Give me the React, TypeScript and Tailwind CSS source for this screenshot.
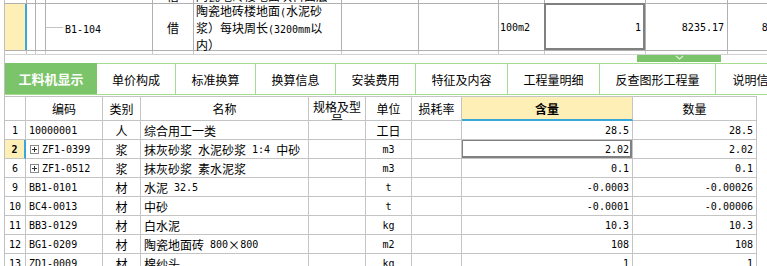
import React from "react";

const SPLIT = /[\x20-\x7e]+|[^\x20-\x7e]+/g;
function M({ s }: { s: string }) {
  const parts = s.match(SPLIT) ?? [];
  return (
    <>
      {parts.map((p, i) =>
        /^[\x20-\x7e]/.test(p) ? (
          <span key={i} className="font-['DejaVu_Sans_Mono',monospace] text-[10px]">
            {p}
          </span>
        ) : (
          <span key={i}>{p}</span>
        )
      )}
    </>
  );
}

const topW = [
  "w-[22px]",
  "w-[9px]",
  "w-[10px]",
  "w-[107px]",
  "w-[41px]",
  "w-[148px]",
  "w-[77px]",
  "w-[80px]",
  "w-[46px]",
  "w-[101px]",
  "w-[82px]",
  "w-[80px]",
];

const tabs: { t: string; w: string; active?: boolean }[] = [
  { t: "工料机显示", w: "w-[92px]", active: true },
  { t: "单价构成", w: "w-[79px]" },
  { t: "标准换算", w: "w-[80px]" },
  { t: "换算信息", w: "w-[80px]" },
  { t: "安装费用", w: "w-[80px]" },
  { t: "特征及内容", w: "w-[92px]" },
  { t: "工程量明细", w: "w-[92px]" },
  { t: "反查图形工程量", w: "w-[116px]" },
  { t: "说明信息", w: "w-[82px]" },
];

type Row = {
  n: string;
  code: string;
  exp?: boolean;
  cat: string;
  name: string;
  unit: string;
  q: string;
  s: string;
  sel?: boolean;
};

const rows: Row[] = [
  { n: "1", code: "10000001", cat: "人", name: "综合用工一类", unit: "工日", q: "28.5", s: "28.5" },
  { n: "2", code: "ZF1-0399", exp: true, cat: "浆", name: "抹灰砂浆 水泥砂浆 1:4 中砂", unit: "m3", q: "2.02", s: "2.02", sel: true },
  { n: "6", code: "ZF1-0512", exp: true, cat: "浆", name: "抹灰砂浆 素水泥浆", unit: "m3", q: "0.1", s: "0.1" },
  { n: "9", code: "BB1-0101", cat: "材", name: "水泥 32.5", unit: "t", q: "-0.0003", s: "-0.00026" },
  { n: "10", code: "BC4-0013", cat: "材", name: "中砂", unit: "t", q: "-0.0001", s: "-0.00006" },
  { n: "11", code: "BB3-0129", cat: "材", name: "白水泥", unit: "kg", q: "10.3", s: "10.3" },
  { n: "12", code: "BG1-0209", cat: "材", name: "陶瓷地面砖 800×800", unit: "m2", q: "108", s: "108" },
  { n: "13", code: "ZD1-0009", cat: "材", name: "棉纱头", unit: "kg", q: "1", s: "1" },
];

const GRID =
  "grid grid-cols-[21px_77px_38px_168px_57px_46px_50px_171px_124px_10px]";
const C = "border-r border-b border-[#c4c4c4] overflow-hidden whitespace-pre";

function Expander() {
  return (
    <span className="ml-[4px] mr-[3px] w-[9px] h-[9px] border border-[#8a8a8a] flex items-center justify-center shrink-0 relative">
      <span className="absolute left-[1px] right-[1px] top-[3px] h-px bg-[#333]" />
      <span className="absolute top-[1px] bottom-[1px] left-[3px] w-px bg-[#333]" />
    </span>
  );
}

export default function App() {
  return (
    <div className="w-[767px] h-[266px] overflow-hidden bg-white pl-[4px] text-[12px] leading-[15px] text-black font-['Noto_Sans_CJK_SC',sans-serif]">
      <div className="border-l border-[#c0c0c0] w-[763px] h-full">
        {/* previous row (cut) */}
        <div className="flex h-[4px] border-b border-[#b0b0b0] overflow-hidden">
          {topW.map((w, i) => (
            <div key={i} className={`${w} shrink-0 h-full border-r border-[#b0b0b0] overflow-hidden whitespace-pre`}>
              {i === 4 && <div className="-mt-[12px] text-center leading-[15px]">借</div>}
              {i === 5 && <div className="-mt-[12px] pl-[2px] leading-[15px]">陶瓷地砖楼地面块料面层</div>}
            </div>
          ))}
        </div>
        {/* main row */}
        <div className="flex h-[47px] border-b border-[#b0b0b0]">
          <div className="w-[22px] shrink-0 h-full bg-[#feefb6] border-r-2 border-[#3aa7d9]" />
          <div className="w-[9px] shrink-0 h-full border-r border-[#b0b0b0]" />
          <div className="w-[10px] shrink-0 h-full border-r border-[#b0b0b0]" />
          <div className="w-[107px] shrink-0 h-full border-r border-[#b0b0b0] flex items-center">
            <div className="w-[17px] h-px bg-[#c4c4c4] mt-[1px]" />
            <div className="ml-[2px] mt-[2px]">
              <M s="B1-104" />
            </div>
          </div>
          <div className="w-[41px] shrink-0 h-full border-r border-[#b0b0b0] flex items-center justify-center pt-[1px]">
            借
          </div>
          <div className="w-[148px] shrink-0 h-full border-r border-[#b0b0b0] flex flex-col justify-center pl-[2px] whitespace-pre">
            <div>
              <M s="陶瓷地砖楼地面(水泥砂" />
            </div>
            <div>
              <M s="浆）每块周长(3200mm以" />
            </div>
            <div>内）</div>
          </div>
          <div className="w-[77px] shrink-0 h-full border-r border-[#b0b0b0]" />
          <div className="w-[80px] shrink-0 h-full border-r border-[#b0b0b0]" />
          <div className="w-[46px] shrink-0 h-full border-r border-[#b0b0b0] flex items-center pl-[1px] pt-[1px]">
            <M s="100m2" />
          </div>
          <div className="w-[101px] shrink-0 h-full border-r border-[#b0b0b0] relative flex items-center justify-end pr-[4px] pt-[1px]">
            <M s="1" />
            <div className="absolute -left-[1px] -top-[1px] right-0 bottom-0 border-2 border-[#808080]" />
          </div>
          <div className="w-[82px] shrink-0 h-full border-r border-[#b0b0b0] flex items-center justify-end pr-[3px] pt-[1px]">
            <M s="8235.17" />
          </div>
          <div className="w-[80px] shrink-0 h-full flex items-center justify-end pr-[4px] pt-[1px]">
            <M s="8235.17" />
          </div>
        </div>
        {/* next row (cut) */}
        <div className="flex h-[4px] border-b border-[#d2d2d2]">
          {topW.map((w, i) => (
            <div key={i} className={`${w} shrink-0 h-full border-r border-[#c8c8c8]`} />
          ))}
        </div>
        {/* gap with collapse handle */}
        <div className="h-[8px]">
          <div className="ml-[632px] w-[84px] h-[7px] bg-[#7cc46a] flex justify-center">
            <svg width="9" height="6" viewBox="0 0 9 6">
              <polyline points="1,1 4.5,4 8,1" fill="none" stroke="#dff3d6" strokeWidth="1.2" />
            </svg>
          </div>
        </div>
        {/* tabs */}
        <div className="flex h-[32px] border-b border-[#a6dc8f] overflow-hidden">
          {tabs.map((t) => (
            <div
              key={t.t}
              className={
                t.active
                  ? `${t.w} shrink-0 h-full bg-[#7cc46a] text-white font-bold flex items-center justify-center text-[13px]`
                  : `${t.w} shrink-0 h-full border-t border-r border-[#a6dc8f] flex items-center justify-center whitespace-nowrap`
              }
            >
              {t.t}
            </div>
          ))}
        </div>
        <div className="h-[1px]" />
        {/* header */}
        <div className={`${GRID} h-[25px]`}>
          <div className={`${C} border-t`} />
          <div className={`${C} border-t flex items-center justify-center`}>编码</div>
          <div className={`${C} border-t flex items-center justify-center`}>类别</div>
          <div className={`${C} border-t flex items-center justify-center`}>名称</div>
          <div className="border-r border-b border-t border-[#c4c4c4] overflow-hidden text-center leading-[13px] pt-[3px] px-[2px] break-all">
            规格及型号
          </div>
          <div className={`${C} border-t flex items-center justify-center`}>单位</div>
          <div className={`${C} border-t flex items-center justify-center`}>损耗率</div>
          <div className="border-r border-t border-[#c4c4c4] border-b-2 border-b-[#3aa7d9] bg-[#feefb6] flex items-center justify-center font-bold">
            含量
          </div>
          <div className={`${C} border-t flex items-center justify-center`}>数量</div>
          <div />
        </div>
        {/* rows */}
        {rows.map((r) => (
          <div key={r.n} className={`${GRID} h-[19px]`}>
            <div
              className={
                r.sel
                  ? "border-b border-[#c4c4c4] border-r-2 border-r-[#3aa7d9] bg-[#feefb6] flex items-center justify-center font-bold pt-[1px]"
                  : `${C} flex items-center justify-center pt-[1px]`
              }
            >
              <M s={r.n} />
            </div>
            <div className={`${C} flex items-center ${r.exp ? "" : "pl-[3px]"} pt-[1px]`}>
              {r.exp && <Expander />}
              <M s={r.code} />
            </div>
            <div className={`${C} flex items-center justify-center`}>{r.cat}</div>
            <div className={`${C} flex items-center pl-[3px] pt-[1px]`}>
              <M s={r.name} />
            </div>
            <div className={C} />
            <div className={`${C} flex items-center justify-center pt-[1px]`}>
              <M s={r.unit} />
            </div>
            <div className={C} />
            <div className={`${C} relative flex items-center justify-end pr-[3px] pt-[1px]`}>
              <M s={r.q} />
              {r.sel && (
                <div className="absolute -left-[1px] -top-[1px] right-0 bottom-0 border-2 border-[#808080]" />
              )}
            </div>
            <div className={`${C} flex items-center justify-end pr-[3px] pt-[1px]`}>
              <M s={r.s} />
            </div>
            <div />
          </div>
        ))}
      </div>
    </div>
  );
}
